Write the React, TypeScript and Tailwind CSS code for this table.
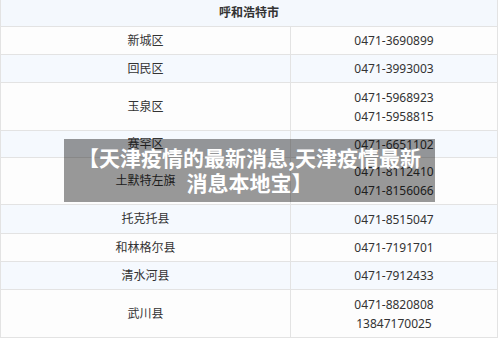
import React from 'react'

type Row = { name: string; phones: string[]; h: string }

// 呼和浩特市各区县电话
const rows: Row[] = [
  { name: '新城区', phones: ['0471-3690899'], h: 'h-[28px]' },
  { name: '回民区', phones: ['0471-3993003'], h: 'h-[28px]' },
  { name: '玉泉区', phones: ['0471-5968923', '0471-5958815'], h: 'h-[48px]' },
  { name: '赛罕区', phones: ['0471-6651102'], h: 'h-[27px]' },
  { name: '土默特左旗', phones: ['0471-8112410', '0471-8156066'], h: 'h-[47px]' },
  { name: '托克托县', phones: ['0471-8515047'], h: 'h-[29px]' },
  { name: '和林格尔县', phones: ['0471-7191701'], h: 'h-[28px]' },
  { name: '清水河县', phones: ['0471-7912433'], h: 'h-[28px]' },
  { name: '武川县', phones: ['0471-8820808', '13847170025'], h: 'h-[48px]' },
]

export default function App() {
  return (
    <div className="relative w-[500px] h-[341px] overflow-hidden bg-white font-['Noto_Sans','Noto_Sans_CJK_SC',sans-serif] text-[12px] text-[#333]">
      <div className="w-[498px] border-x border-[#e3e3e3] flex flex-col">
        {/* 表头 */}
        <div className="h-[27px] border-b border-[#e3e3e3] bg-[#f4f8fd] flex items-center justify-center font-bold">
          呼和浩特市
        </div>
        {rows.map((r, i) => (
          <div
            key={r.name}
            className={`${r.h} border-b border-[#e3e3e3] flex ${i % 2 === 1 ? 'bg-[#f5f9fe]' : 'bg-[#fdfdfd]'}`}
          >
            <div className="w-[290px] border-r border-[#e3e3e3] flex items-center justify-center">
              {r.name}
            </div>
            <div className="flex-1 flex flex-col items-center justify-center leading-[19px]">
              {r.phones.map((p) => (
                <span key={p}>{p}</span>
              ))}
            </div>
          </div>
        ))}
      </div>

      {/* 标题遮罩 */}
      <div className="absolute left-[64px] top-[139px] w-[371px] h-[63px] bg-black/40 flex items-center justify-center text-center text-white font-bold text-[21px] leading-[25px] font-['Noto_Sans_CJK_SC',sans-serif]">
        <p className="-mt-[2px]">
          【天津疫情的最新消息,天津疫情最新
          <br />
          消息本地宝】
        </p>
      </div>
    </div>
  )
}
